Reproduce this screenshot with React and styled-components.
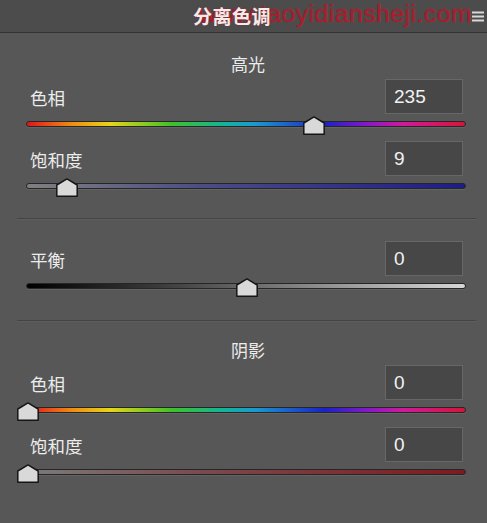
import React from 'react';
import styled, { createGlobalStyle } from 'styled-components';

const CJK = `"Noto Sans CJK SC", "Noto Sans", sans-serif`;
const NUM = `"Liberation Sans", Arial, sans-serif`;

const HUE = 'linear-gradient(to right, #e0141e 0%, #f08a12 10%, #e6d616 19%, #3fc22a 33%, #12b49a 45%, #1a9ad0 52%, #1a22c8 68%, #8a18c8 78%, #d01a9a 86%, #d81438 100%)';

const GlobalStyle = createGlobalStyle`
  html, body {
    margin: 0;
    background: #575757;
  }
`;

export default function App() {
  return (
    <>
      <GlobalStyle />
      <Panel>
        <Header>
          <Title>分离色调</Title>
          <Watermark>www.taoyidiansheji.com</Watermark>
          <MenuButton>
            <svg width="12" height="11" viewBox="0 0 12 11">
              <rect x="0" y="0.5" width="12" height="2" fill="#d8d8d8" />
              <rect x="0" y="4.5" width="12" height="2" fill="#d8d8d8" />
              <rect x="0" y="8.5" width="12" height="2" fill="#d8d8d8" />
            </svg>
          </MenuButton>
        </Header>

        <Section $top={20} $bottom={22}>
          <Heading>高光</Heading>
          <SliderField label="色相" value={235} min={0} max={360} track={HUE} first />
          <SliderField
            label="饱和度"
            value={9}
            min={0}
            max={100}
            track="linear-gradient(to right, #808080, #4c4c86 40%, #1c1c8a)"
          />
        </Section>

        <Divider />

        <Section $top={17} $bottom={24}>
          <SliderField
            label="平衡"
            value={0}
            min={-100}
            max={100}
            track="linear-gradient(to right, #000 0%, #3a3a3a 30%, #8a8a8a 65%, #d6d6d6 100%)"
            first
          />
        </Section>

        <Divider />

        <Section $top={17} $bottom={30}>
          <Heading>阴影</Heading>
          <SliderField label="色相" value={0} min={0} max={360} track={HUE} first />
          <SliderField
            label="饱和度"
            value={0}
            min={0}
            max={100}
            track="linear-gradient(to right, #7a7a7a, #7a4a4e 40%, #7e1a1e)"
          />
        </Section>
      </Panel>
    </>
  );
}

function SliderField({ label, value, min, max, track, first }) {
  const pct = ((value - min) / (max - min)) * 100;
  return (
    <Field $first={first}>
      <Row>
        <Label>{label}</Label>
        <ValueBox>{value}</ValueBox>
      </Row>
      <TrackArea>
        <Track $fill={track} />
        <Thumb style={{ left: `calc(${pct}% - ${9 + pct * 0.025}px)` }}>
          <svg width="22" height="19" viewBox="0 0 22 19">
            <path
              d="M11 0.9 L21.2 7 L21.2 18.2 L0.8 18.2 L0.8 7 Z"
              fill="#d9d9d9"
              stroke="#151515"
              strokeWidth="1.5"
              strokeLinejoin="round"
            />
          </svg>
        </Thumb>
      </TrackArea>
    </Field>
  );
}

const Panel = styled.div`
  width: 487px;
  min-height: 523px;
  background: #575757;
  display: flex;
  flex-direction: column;
`;

const Header = styled.header`
  position: relative;
  height: 32px;
  display: flex;
  align-items: center;
  padding-left: 193px;
  padding-right: 3px;
  background: #4c4c4c;
  border-bottom: 1px solid #333;
  overflow: hidden;
`;

const Title = styled.div`
  position: relative;
  z-index: 1;
  font-family: ${CJK};
  font-size: 19px;
  font-weight: 700;
  letter-spacing: 0.5px;
  color: #f4eaea;
  line-height: 32px;
  text-shadow: 0 0 2px rgba(170, 30, 45, 0.6);
`;

/* red site stamp running under the title */
const Watermark = styled.div`
  position: absolute;
  right: 15px;
  top: 1px;
  font-family: ${NUM};
  font-size: 24.8px;
  line-height: 26px;
  letter-spacing: 0.45px;
  color: rgba(176, 26, 42, 0.9);
  -webkit-text-stroke: 0.5px rgba(176, 26, 42, 0.9);
  white-space: nowrap;
`;

const MenuButton = styled.div`
  margin-left: auto;
  display: flex;
  align-items: center;
  height: 32px;
  position: relative;
  z-index: 1;
`;

const Section = styled.section`
  display: flex;
  flex-direction: column;
  padding: ${p => p.$top}px 21px ${p => p.$bottom}px 26px;
`;

const Heading = styled.div`
  font-family: ${CJK};
  font-size: 17px;
  line-height: 22px;
  color: #ececec;
  text-align: center;
  margin-left: 4px;
`;

const Divider = styled.hr`
  margin: 0 11px 0 17px;
  border: none;
  border-top: 1px solid #444;
  border-bottom: 1px solid #5e5e5e;
`;

const Field = styled.div`
  display: flex;
  flex-direction: column;
  margin-top: ${p => (p.$first ? 4 : 7)}px;
`;

const Row = styled.div`
  display: flex;
  align-items: center;
  justify-content: space-between;
  height: 35px;
`;

const Label = styled.div`
  font-family: ${CJK};
  font-size: 17.5px;
  color: #ececec;
  padding: 1px 0 0 4px;
`;

const ValueBox = styled.div`
  box-sizing: border-box;
  width: 78px;
  height: 35px;
  margin-right: 3px;
  padding-left: 8px;
  display: flex;
  align-items: center;
  background: #474747;
  border: 1px solid #676767;
  font-family: ${NUM};
  font-size: 19px;
  color: #f2f2f2;
`;

const TrackArea = styled.div`
  position: relative;
  height: 20px;
  display: flex;
  align-items: center;
`;

const Track = styled.div`
  box-sizing: border-box;
  width: 100%;
  height: 6px;
  border-radius: 3px;
  border: 1px solid #262626;
  background: ${p => p.$fill};
  box-shadow: 0 1px 0 rgba(255, 255, 255, 0.08);
`;

const Thumb = styled.div`
  position: absolute;
  top: 2px;
  width: 22px;
  height: 19px;
  line-height: 0;
`;
